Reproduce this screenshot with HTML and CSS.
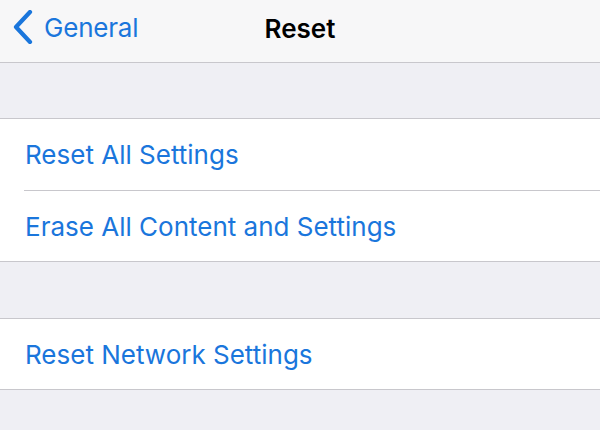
FILE: index.html
```html
<!DOCTYPE html>
<html>
<head>
<meta charset="utf-8">
<link rel="stylesheet" href="styles.css">
</head>
<body>
<header class="nav">
  <div class="back">
    <svg class="chev" width="22" height="34" viewBox="0 0 22 34"><path d="M18 2 L4 17 L18 32" fill="none" stroke="#1a76dc" stroke-width="4.2" stroke-linecap="round" stroke-linejoin="round"/></svg>
    <span class="back-label">General</span>
  </div>
  <div class="title">Reset</div>
</header>
<main>
  <div class="gap"></div>
  <section class="group">
    <div class="row first"><span>Reset All Settings</span></div>
    <div class="row"><span>Erase All Content and Settings</span></div>
  </section>
  <div class="gap gap-2"></div>
  <section class="group">
    <div class="row"><span>Reset Network Settings</span></div>
  </section>
</main>
</body>
</html>
```
FILE: styles.css
```css
html, body {
  margin: 0;
  padding: 0;
  background: #efeff4;
  font-family: Inter, "Liberation Sans", sans-serif;
  width: 600px;
  height: 430px;
  overflow: hidden;
}
.nav {
  position: relative;
  height: 62px;
  background: #f7f7f8;
  border-bottom: 1px solid #c8c7cc;
  display: flex;
  align-items: center;
  justify-content: center;
}
.back {
  position: absolute;
  left: 12px;
  top: 10px;
  display: flex;
  align-items: center;
  gap: 10px;
  color: #1a76dc;
}
.chev { display: block; }
.back-label {
  font-size: 26px;
  letter-spacing: -0.2px;
}
.title {
  font-size: 26px;
  font-weight: 600;
  color: #000;
  margin-top: -6px;
}
.gap { height: 55px; }
.gap-2 { height: 56px; }
.group {
  background: #fff;
  border-top: 1px solid #c8c7cc;
  border-bottom: 1px solid #c8c7cc;
}
.row {
  height: 70px;
  margin-left: 24px;
  display: flex;
  align-items: center;
  color: #1a76dc;
  font-size: 26px;
  padding-left: 1px;
}
.row.first { height: 71px; }
.row + .row {
  border-top: 1px solid #c8c7cc;
}
```
